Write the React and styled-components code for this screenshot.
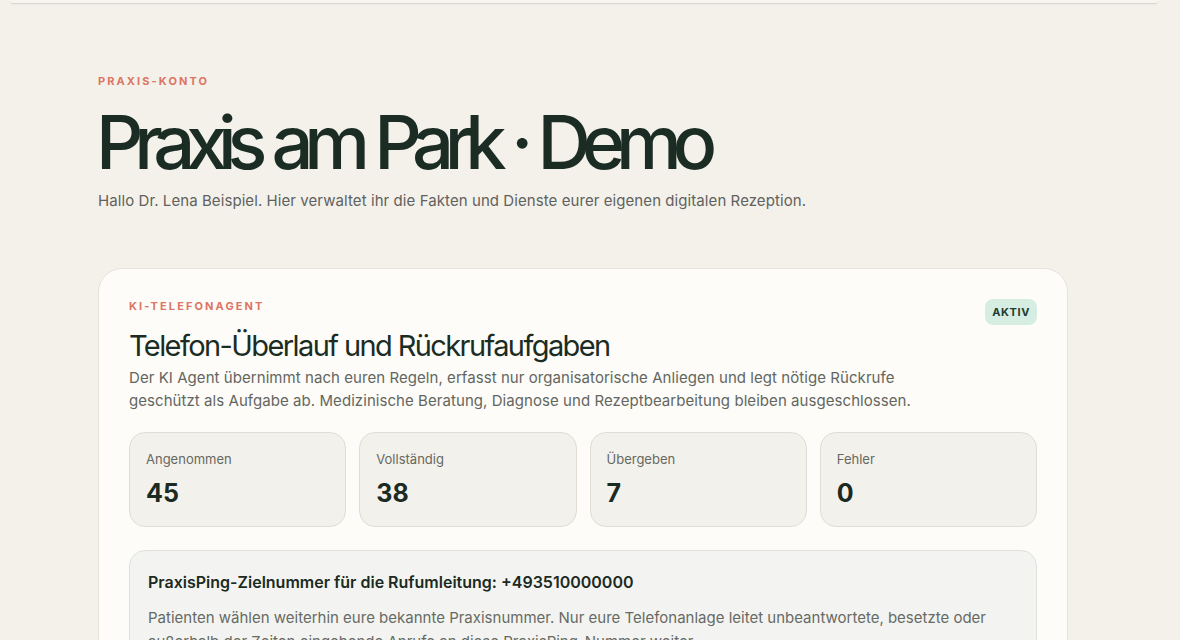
import React from 'react'
import styled, { createGlobalStyle } from 'styled-components'

const Global = createGlobalStyle`
  html, body {
    margin: 0;
    padding: 0;
    background: #f4f1ea;
    font-family: Inter, "Noto Sans", sans-serif;
    color: #1b2a23;
  }
  * { box-sizing: border-box; }
`

const Page = styled.div`
  height: 640px;
  overflow: hidden;
`

const TopBar = styled.div`
  height: 4px;
  margin: 0 22px 0 10px;
  background: #f7f5f0;
  border-bottom: 1px solid #dcd7cd;
  border-radius: 0 0 3px 3px;
  box-shadow: 0 1px 2px rgba(0, 0, 0, 0.04);
`

const Main = styled.main`
  padding: 70px 0 0 98px;
  width: 1068px;
`

const Eyebrow = styled.div`
  font-size: 11px;
  font-weight: 700;
  letter-spacing: 2.1px;
  color: #dc7563;
  text-transform: uppercase;
`

const Title = styled.h1`
  margin: 15px 0 0 -2px;
  font-size: 74px;
  line-height: 79px;
  font-weight: 500;
  letter-spacing: -0.125em;
  word-spacing: 0.04em;
  color: #1a2c24;
`

const Lead = styled.p`
  margin: 8px 0 0;
  font-size: 15px;
  line-height: 22px;
  color: #5f625e;
  letter-spacing: 0.005em;
`

const Card = styled.section`
  margin-top: 56px;
  background: #fdfcf8;
  border: 1px solid #e7e3da;
  border-radius: 24px;
  padding: 30px 30px 40px;
`

const CardHead = styled.div`
  display: flex;
  justify-content: space-between;
  align-items: flex-start;
`

const CardTitle = styled.h2`
  margin: 16px 0 0;
  font-size: 29px;
  line-height: 34px;
  font-weight: 400;
  letter-spacing: -0.055em;
  color: #1a2c24;
`

const Badge = styled.span`
  padding: 6px 7px;
  border-radius: 8px;
  background: #d5ede2;
  color: #1f3b31;
  font-size: 11px;
  font-weight: 700;
  letter-spacing: 0.6px;
`

const Desc = styled.p`
  margin: 3px 0 0;
  max-width: 800px;
  font-size: 15px;
  line-height: 23px;
  color: #636660;
  letter-spacing: 0.004em;
`

const Stats = styled.div`
  margin-top: 20px;
  display: grid;
  grid-template-columns: repeat(4, 1fr);
  gap: 13px;
`

const Stat = styled.div`
  height: 95px;
  padding: 18px 16px;
  background: #f3f1eb;
  border: 1px solid #e1ddd4;
  border-radius: 16px;
`

const StatLabel = styled.div`
  font-size: 13px;
  line-height: 16px;
  color: #666862;
`

const StatValue = styled.div`
  margin-top: 12px;
  font-size: 25px;
  line-height: 28px;
  font-weight: 700;
  color: #1b2a23;
`

const Info = styled.div`
  margin-top: 23px;
  padding: 20px 18px;
  background: #f3f4f1;
  border: 1px solid #e1e1dc;
  border-radius: 16px;
`

const InfoTitle = styled.div`
  font-size: 16px;
  line-height: 22px;
  font-weight: 600;
  color: #1b2a23;
`

const InfoText = styled.p`
  margin: 13px 0 0;
  font-size: 15px;
  line-height: 24px;
  color: #676a64;
  letter-spacing: 0;
  max-width: 880px;
`

const stats = [
  { label: 'Angenommen', value: 45 },
  { label: 'Vollständig', value: 38 },
  { label: 'Übergeben', value: 7 },
  { label: 'Fehler', value: 0 },
]

export default function App() {
  return (
    <Page>
      <Global />
      <TopBar />
      <Main>
        <Eyebrow>Praxis-Konto</Eyebrow>
        <Title>Praxis am Park · Demo</Title>
        <Lead>Hallo Dr. Lena Beispiel. Hier verwaltet ihr die Fakten und Dienste eurer eigenen digitalen Rezeption.</Lead>

        <Card>
          <CardHead>
            <div>
              <Eyebrow>KI-Telefonagent</Eyebrow>
              <CardTitle>Telefon-Überlauf und Rückrufaufgaben</CardTitle>
            </div>
            <Badge>AKTIV</Badge>
          </CardHead>
          <Desc>
            Der KI Agent übernimmt nach euren Regeln, erfasst nur organisatorische Anliegen und legt nötige Rückrufe
            geschützt als Aufgabe ab. Medizinische Beratung, Diagnose und Rezeptbearbeitung bleiben ausgeschlossen.
          </Desc>
          <Stats>
            {stats.map((s) => (
              <Stat key={s.label}>
                <StatLabel>{s.label}</StatLabel>
                <StatValue>{s.value}</StatValue>
              </Stat>
            ))}
          </Stats>
          <Info>
            <InfoTitle>PraxisPing-Zielnummer für die Rufumleitung: +493510000000</InfoTitle>
            <InfoText>
              Patienten wählen weiterhin eure bekannte Praxisnummer. Nur eure Telefonanlage leitet unbeantwortete, besetzte oder
              außerhalb der Zeiten eingehende Anrufe an diese PraxisPing-Nummer weiter.
            </InfoText>
          </Info>
        </Card>
      </Main>
    </Page>
  )
}
